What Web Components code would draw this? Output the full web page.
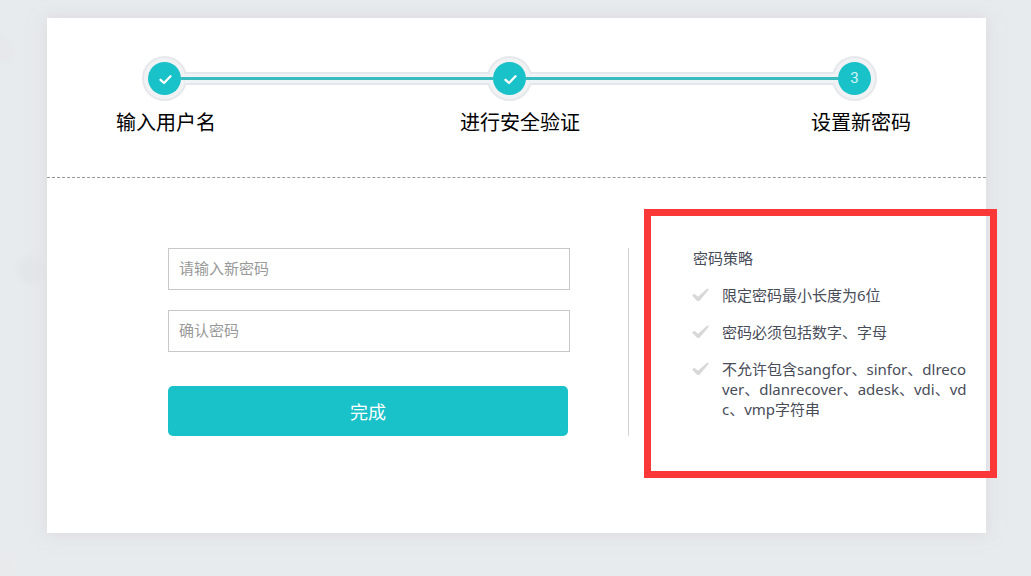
<!DOCTYPE html>
<html lang="zh-CN">
<head>
    <meta charset="UTF-8">
    <meta name="viewport" content="width=device-width, initial-scale=1.0">
    <title>设置新密码</title>
    <style>
        body {
            margin: 0;
            min-height: 100vh;
            background-color: #e7ebee;
            /* faint spots in the backdrop */
            background-image:
                radial-gradient(circle at 30px 270px, #e4e7ea 8px, transparent 18px),
                radial-gradient(circle at 0 50px, #e6e8eb 8px, transparent 18px),
                radial-gradient(circle at 4px 566px, #e9eaeb 8px, transparent 18px);
            font-family: "Noto Sans", "Noto Sans CJK SC", sans-serif;
        }
    </style>
</head>
<body>
    <reset-card>
        <step-progress slot="header" current="3">
            <step-label>输入用户名</step-label>
            <step-label>进行安全验证</step-label>
            <step-label>设置新密码</step-label>
        </step-progress>
        <password-form></password-form>
        <password-policy heading="密码策略">
            <policy-rule>限定密码最小长度为6位</policy-rule>
            <policy-rule>密码必须包括数字、字母</policy-rule>
            <policy-rule>不允许包含sangfor、sinfor、dlrecover、dlanrecover、adesk、vdi、vdc、vmp字符串</policy-rule>
        </password-policy>
    </reset-card>

    <script>
        // Base class: every element renders its template in an open shadow root
        class BaseElement extends HTMLElement {
            constructor() {
                super();
                this.attachShadow({ mode: 'open' });
            }

            connectedCallback() {
                this.shadowRoot.innerHTML = this.render();
            }
        }

        // White card with a header and a two column body
        class ResetCard extends BaseElement {
            render() {
                return `
                <style>
                    :host {
                        display: block;
                        padding: 18px 45px 43px 47px;
                    }

                    main {
                        background-color: #fff;
                        box-shadow: 0 0 15px rgba(210, 200, 208, 0.5);
                    }

                    header {
                        border-bottom: 1px dashed #999;
                    }

                    .body {
                        display: flex;
                        padding: 70px 0 97px 121px;
                    }
                </style>
                <main>
                    <header><slot name="header"></slot></header>
                    <div class="body"><slot></slot></div>
                </main>
                `;
            }
        }

        // Progress rail with numbered nodes, labels are slotted below it
        class StepProgress extends BaseElement {
            createNodes() {
                const current = Number(this.getAttribute('current')) || 1;
                const check = `
                    <svg width="17" height="12" viewBox="0 0 17 12" aria-hidden="true">
                        <path d="M4.500 6.800 L8 10 L14.500 3.300" fill="none" stroke="#fff" stroke-width="2.300" stroke-linecap="round" stroke-linejoin="round"/>
                    </svg>`;
                let nodes = '';
                for (let i = 1; i <= this.children.length; i++) {
                    if (i > 1) {
                        nodes += '<div class="rail"><div class="line"></div></div>';
                    }
                    nodes += `<div class="node"><div class="dot">${i < current ? check : i}</div></div>`;
                }
                return nodes;
            }

            render() {
                return `
                <style>
                    :host {
                        display: block;
                        padding: 38px 0 40px;
                    }

                    .track {
                        display: flex;
                        align-items: center;
                        padding: 0 109px 0 95px;
                    }

                    .node {
                        box-sizing: border-box;
                        flex: none;
                        display: flex;
                        align-items: center;
                        justify-content: center;
                        width: 45px;
                        height: 45px;
                        border: 2px solid #e6e8ec;
                        border-radius: 50%;
                        background-color: #f1f2f4;
                    }

                    .dot {
                        display: flex;
                        flex: none;
                        align-items: center;
                        justify-content: center;
                        width: 33px;
                        height: 33px;
                        border-radius: 50%;
                        background-color: #19c1c8;
                        color: #d5f5f6;
                        font: 15px/33px Roboto, sans-serif;
                    }

                    /* the rail runs over the ring, the line reaches the dots */
                    .rail {
                        position: relative;
                        flex: 1;
                        margin: 0 -2px;
                        padding: 3px 0;
                        border: solid #e4e7eb;
                        border-width: 2px 0;
                        background-color: #eff5f6;
                    }

                    .line {
                        height: 3px;
                        margin: 0 -4px;
                        background-color: #38bcc0;
                    }

                    .labels {
                        display: grid;
                        grid-template-columns: 344fr 351fr auto;
                        margin-top: 8px;
                        padding: 0 75px 0 69px;
                    }
                </style>
                <div class="track">${this.createNodes()}</div>
                <div class="labels"><slot></slot></div>
                `;
            }
        }

        class StepLabel extends BaseElement {
            render() {
                return `
                <style>
                    :host {
                        display: block;
                        color: #000;
                        font-size: 20px;
                        line-height: 28px;
                        white-space: nowrap;
                    }
                </style>
                <slot></slot>
                `;
            }
        }

        class PasswordForm extends BaseElement {
            render() {
                return `
                <style>
                    :host {
                        display: block;
                        flex: 1;
                        min-width: 0;
                        margin-right: 58px;
                    }

                    form {
                        display: flex;
                        flex-direction: column;
                        gap: 20px;
                    }

                    input {
                        box-sizing: border-box;
                        width: 100%;
                        height: 42px;
                        padding: 0 10px 2px;
                        border: 1px solid #c8c8c8;
                        border-radius: 0;
                        background-color: #fff;
                        color: #444;
                        font: inherit;
                        font-size: 15px;
                    }

                    input::placeholder {
                        color: #999;
                    }

                    button {
                        height: 50px;
                        margin: 14px 2px 0 0;
                        padding: 0;
                        border: 0;
                        border-radius: 5px;
                        background-color: #19c1c8;
                        color: #fff;
                        font: inherit;
                        font-size: 18px;
                        cursor: pointer;
                    }
                </style>
                <form>
                    <input type="password" placeholder="请输入新密码" aria-label="请输入新密码" autocomplete="new-password">
                    <input type="password" placeholder="确认密码" aria-label="确认密码" autocomplete="new-password">
                    <button type="submit">完成</button>
                </form>
                `;
            }

            connectedCallback() {
                super.connectedCallback();
                this.shadowRoot.querySelector('form').addEventListener('submit', (e) => e.preventDefault());
            }
        }

        // Policy column, framed by a red marker that overlaps the card edge
        class PasswordPolicy extends BaseElement {
            render() {
                return `
                <style>
                    :host {
                        position: relative;
                        box-sizing: border-box;
                        flex: none;
                        width: 358px;
                        padding-left: 64px;
                        border-left: 1px solid #d2d2d2;
                        color: #484c59;
                        font-size: 15px;
                        line-height: 20px;
                    }

                    h2 {
                        margin: 0 0 17px;
                        font: inherit;
                    }

                    .rules {
                        display: flex;
                        flex-direction: column;
                        gap: 17px;
                    }

                    .marker {
                        position: absolute;
                        inset: -39px -11px -42px 15px;
                        border: 7px solid #fb3838;
                        pointer-events: none;
                    }
                </style>
                <h2>${this.getAttribute('heading') || ''}</h2>
                <div class="rules" role="list"><slot></slot></div>
                <div class="marker"></div>
                `;
            }
        }

        class PolicyRule extends BaseElement {
            render() {
                this.setAttribute('role', 'listitem');
                return `
                <style>
                    :host {
                        display: flex;
                        align-items: flex-start;
                        gap: 13px;
                        padding-right: 16px;
                    }

                    svg {
                        flex: none;
                        margin: 2px 0 0 -1px;
                    }

                    span {
                        word-break: break-all;
                        line-break: anywhere;
                    }
                </style>
                <svg width="17" height="16" viewBox="0 0 17 16" aria-hidden="true">
                    <path d="M0 8.500 L2.500 6.800 L6 9.800 L15.300 1.500 L17 2.500 L7.300 14 L5.300 14 Z" fill="#d8d8d8"/>
                </svg>
                <span><slot></slot></span>
                `;
            }
        }

        customElements.define('reset-card', ResetCard);
        customElements.define('step-progress', StepProgress);
        customElements.define('step-label', StepLabel);
        customElements.define('password-form', PasswordForm);
        customElements.define('password-policy', PasswordPolicy);
        customElements.define('policy-rule', PolicyRule);
    </script>
</body>
</html>
